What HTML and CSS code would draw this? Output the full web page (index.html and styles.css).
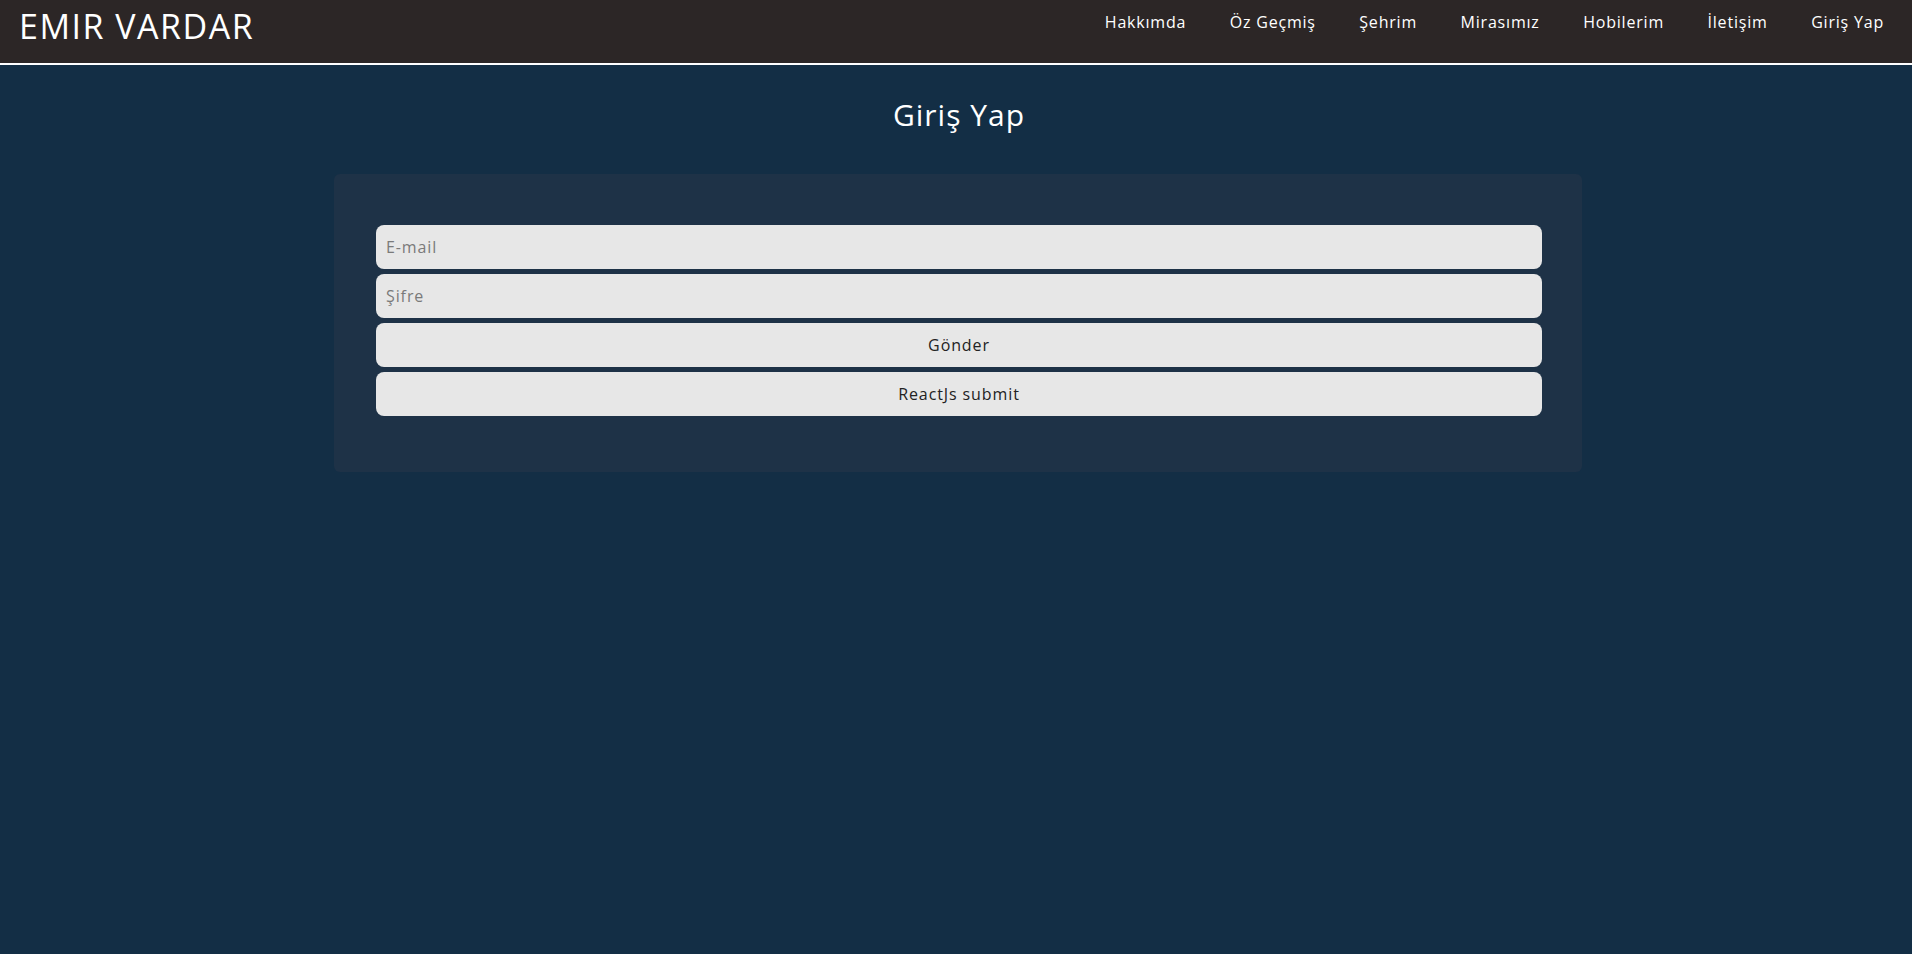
FILE: index.html
```html
<!DOCTYPE html>
<html lang="tr">
<head>
<meta charset="utf-8">
<title>Giriş Yap</title>
<link rel="stylesheet" href="styles.css">
</head>
<body>
<header class="site-header">
  <div class="logo">EMIR VARDAR</div>
  <nav class="nav">
    <a class="nav-link" href="#">Hakkımda</a>
    <a class="nav-link" href="#">Öz Geçmiş</a>
    <a class="nav-link" href="#">Şehrim</a>
    <a class="nav-link" href="#">Mirasımız</a>
    <a class="nav-link" href="#">Hobilerim</a>
    <a class="nav-link" href="#">İletişim</a>
    <a class="nav-link" href="#">Giriş Yap</a>
  </nav>
</header>
<main class="main">
  <h1 class="page-title">Giriş Yap</h1>
  <form class="card" onsubmit="return false;">
    <input class="field" type="email" placeholder="E-mail">
    <input class="field" type="password" placeholder="Şifre">
    <button class="field btn" type="submit">Gönder</button>
    <button class="field btn" type="button">ReactJs submit</button>
  </form>
</main>
</body>
</html>
```

FILE: styles.css
```css
* { box-sizing: border-box; }
html, body {
  margin: 0;
  padding: 0;
  background: #132e45;
  font-family: "Open Sans", "Liberation Sans", sans-serif;
  min-height: 100%;
}
body { min-height: 954px; }

.site-header {
  height: 65px;
  background: #2c2626;
  border-bottom: 2px solid #ffffff;
  display: flex;
  justify-content: space-between;
  align-items: flex-start;
}
.logo {
  color: #ffffff;
  font-size: 34px;
  line-height: 1;
  letter-spacing: 1.5px;
  padding-top: 9px;
  padding-left: 19px;
}
.nav {
  display: flex;
  gap: 43.5px;
  padding-top: 14px;
  padding-right: 28px;
}
.nav-link {
  color: #ffffff;
  text-decoration: none;
  font-size: 16px;
  line-height: 1;
  letter-spacing: 0.8px;
}

.main {
  display: flex;
  flex-direction: column;
  align-items: center;
  padding-left: 4px;
}
.page-title {
  margin: 35px 0 0 2px;
  color: #ffffff;
  font-weight: 400;
  font-size: 30px;
  line-height: 1;
  letter-spacing: 1px;
}
.card {
  margin-top: 44px;
  width: 1248px;
  background: #1e3247;
  border-radius: 6px;
  padding: 51px 40px 56px 42px;
  display: flex;
  flex-direction: column;
  gap: 5px;
}
.field {
  height: 44px;
  width: 100%;
  border: none;
  border-radius: 8px;
  background: #e7e7e7;
  padding: 0 10px;
  font-family: "Open Sans", "Liberation Sans", sans-serif;
  font-size: 16px;
  letter-spacing: 0.9px;
  color: #222222;
  outline: none;
}
.field::placeholder { color: #7a7a7a; }
.btn {
  text-align: center;
  cursor: pointer;
  color: #222222;
}
```
